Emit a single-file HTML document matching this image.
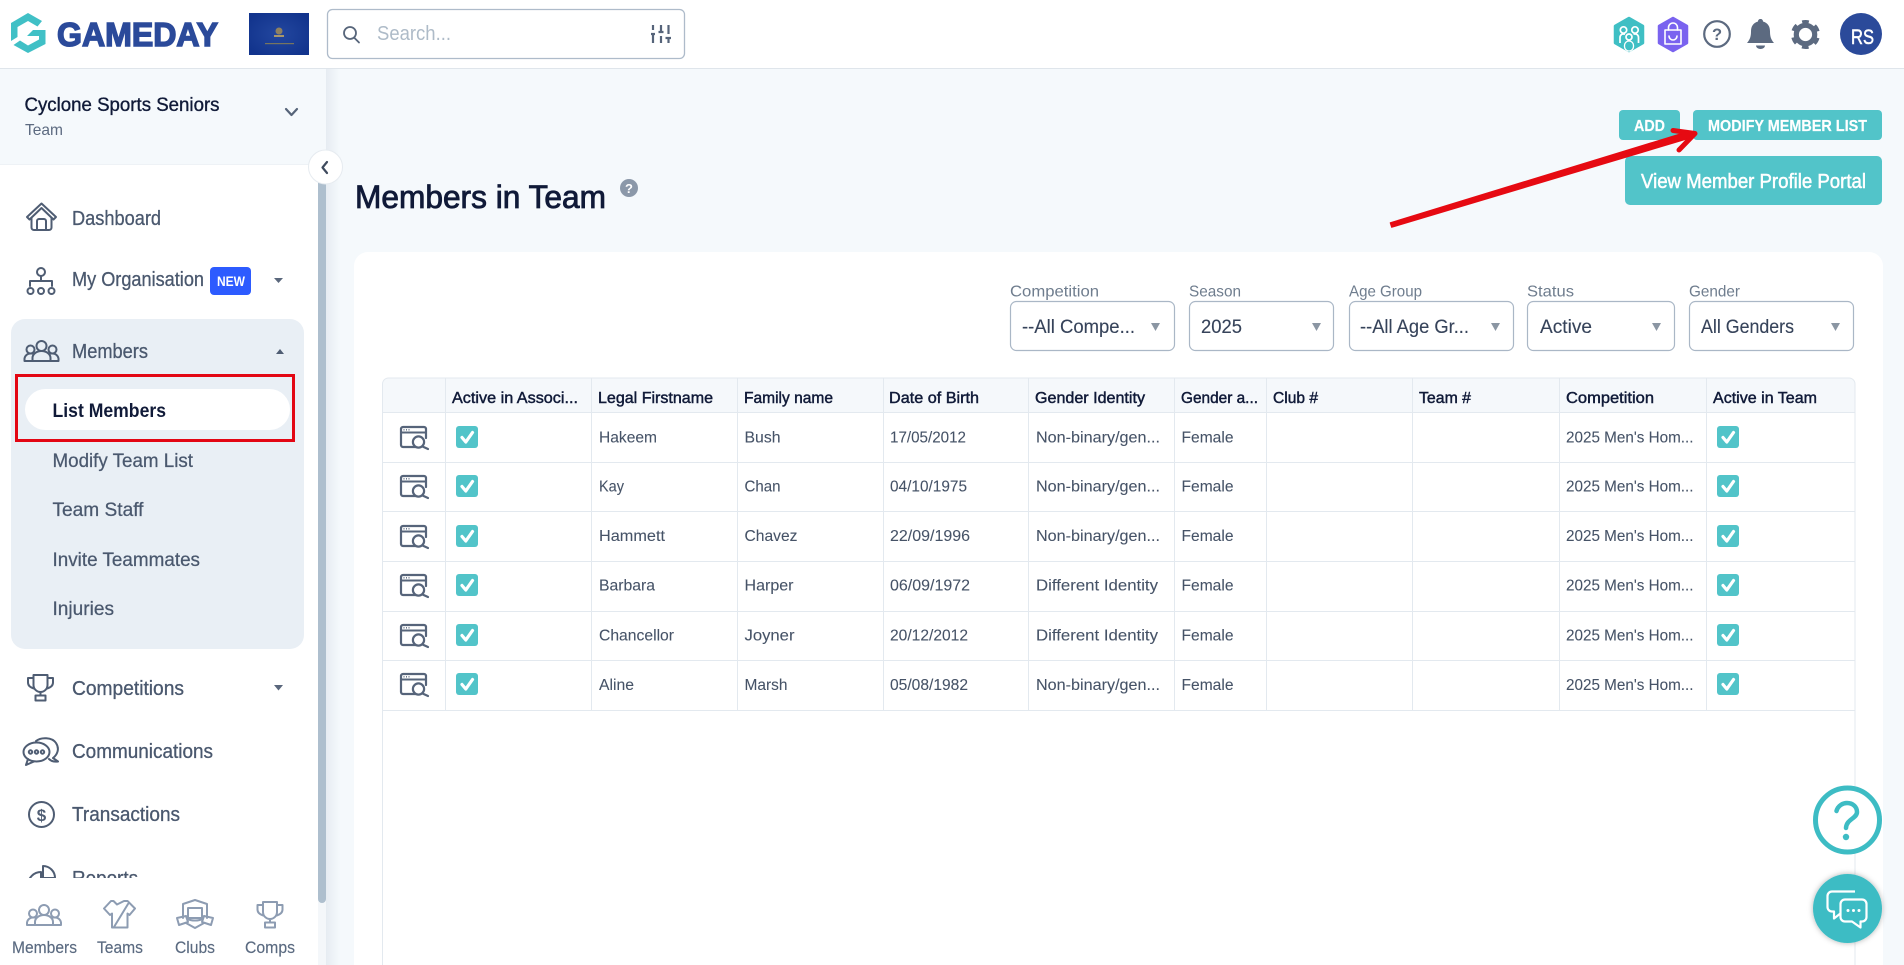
<!DOCTYPE html>
<html lang="en">
<head>
<meta charset="utf-8">
<title>Members in Team</title>
<style>
html,body{margin:0;padding:0;width:1904px;height:965px;overflow:hidden;background:#f5f9fc}
svg{display:block}
text{font-family:"Liberation Sans",Arial,sans-serif;white-space:pre}
.nav{font-size:20px;fill:#4a586e;stroke:#4a586e;stroke-width:.3}
.sub{font-size:19.5px;fill:#4a586e;stroke:#4a586e;stroke-width:.25}
.foot{font-size:17px;fill:#5a6a80;stroke:#5a6a80;stroke-width:.15}
.lab{font-size:16px;fill:#6f7d8e}
.sel{font-size:19px;fill:#36435a;stroke:#36435a;stroke-width:.12}
.th{font-size:16px;fill:#101a38;stroke:#101a38;stroke-width:.45}
.td{font-size:16px;fill:#465367;stroke:#465367;stroke-width:.08}
.ic{fill:none;stroke:#4f5d73;stroke-width:2;stroke-linecap:round;stroke-linejoin:round}
.fic{fill:none;stroke:#8d9cb2;stroke-width:2;stroke-linecap:round;stroke-linejoin:round}
.ln{stroke:#e3e9ef;stroke-width:1}
.btn{font-size:15.5px;font-weight:bold;fill:#fff;stroke:#fff;stroke-width:.2}
</style>
</head>
<body>
<svg width="1904" height="965" viewBox="0 0 1904 965" xmlns="http://www.w3.org/2000/svg">
<defs>
<filter id="sh" x="-20%" y="-20%" width="140%" height="140%"><feDropShadow dx="0" dy="0" stdDeviation="3" flood-color="#000" flood-opacity=".3"/></filter>
<linearGradient id="sg" x1="0" x2="1" y1="0" y2="0"><stop offset="0" stop-color="#e6ecf2"/><stop offset="1" stop-color="#f5f9fc"/></linearGradient>
<radialGradient id="fl" cx=".5" cy=".5" r=".6"><stop offset="0" stop-color="#23479f"/><stop offset="1" stop-color="#12348d"/></radialGradient>
<g id="view">
<path d="M20 21H3a2 2 0 0 1-2-2V3a2 2 0 0 1 2-2h21a2 2 0 0 1 2 2v9" fill="none" stroke="#56647a" stroke-width="2.2" stroke-linecap="round"/>
<path d="M1 6.5H26" stroke="#56647a" stroke-width="2"/>
<path d="M3.5 3.8h1M6 3.8h1M8.5 3.8h1" stroke="#56647a" stroke-width="1.4"/>
<circle cx="18.5" cy="16" r="5.6" fill="#fff" stroke="#56647a" stroke-width="2.2"/>
<path d="M22.5 20.5L28 23" stroke="#56647a" stroke-width="2.2" stroke-linecap="round"/>
</g>
<g id="chk"><rect width="22" height="22" rx="3" fill="#52c4c9"/><path d="M6 11.5L9.8 16L16.5 6.5" fill="none" stroke="#fff" stroke-width="3.2" stroke-linecap="round" stroke-linejoin="round"/></g>
<g id="ppl">
<circle cx="18" cy="6" r="5"/><circle cx="7" cy="9.5" r="4"/><circle cx="29" cy="9.5" r="4"/>
<path d="M1 21V18.500a6 6 0 0 1 6-5h2M35 21V18.500a6 6 0 0 0-6-5h-2M1 21H35M9 21v-3a9 7 0 0 1 18 0v3"/>
</g>
<g id="trophy">
<path d="M7 1H21V11a7 7 0 0 1-14 0ZM7 4H1.500V8.500c0 3 2.500 5 5.800 6M21 4H26.500V8.500c0 3-2.500 5-5.800 6M14 18V21M9 21.500H19V26.500H9Z"/>
</g>
<g id="sel"><path d="M0 0H9L4.500 8Z" fill="#8b96a3"/></g>
</defs>

<!-- main background -->
<rect width="1904" height="965" fill="#f5f9fc"/>

<!-- card -->
<rect x="354" y="252" width="1529" height="760" rx="14" fill="#fff"/>

<!-- header -->
<rect width="1904" height="68" fill="#fff"/>
<rect y="68" width="1904" height="1" fill="#dfe5eb"/>
<path d="M28 13L42 21L37.500 26.500L28 21L17.500 27V37L11 41V23Z" fill="#40c0c6"/>
<path d="M45.500 30V44L28 53L13.500 45L20 40.500L28 45.500L39 39.500V36H27L33 30Z" fill="#40c0c6"/>
<text x="57" y="46" font-size="33.500" font-weight="bold" fill="#2b4a9a" stroke="#2b4a9a" stroke-width="1.500" textLength="161" lengthAdjust="spacingAndGlyphs">GAMEDAY</text>
<rect x="249" y="13" width="60" height="42" fill="url(#fl)"/>
<circle cx="279" cy="31" r="3.500" fill="#8f8160"/><rect x="274" y="35" width="10" height="2" fill="#a8976a"/><rect x="265" y="43" width="29" height="1.200" fill="#77755f"/>
<rect x="327.500" y="9.500" width="357" height="49" rx="5" fill="#fff" stroke="#aebbca" stroke-width="1.300"/>
<circle cx="350" cy="33" r="6" fill="none" stroke="#57657a" stroke-width="1.800"/><path d="M354.500 38L359 42.500" stroke="#57657a" stroke-width="1.800" stroke-linecap="round"/>
<text x="377" y="40" font-size="20" fill="#aebbc8" textLength="74" lengthAdjust="spacingAndGlyphs">Search...</text>
<path d="M653 25V30M651 34H655M653 34V43M661 25V32M658.500 32H663.500M661 36V43M668.500 25V34M665.500 38H671M668.500 38V43" fill="none" stroke="#56647a" stroke-width="2.200"/>

<!-- top right icons -->
<path d="M1629 18L1643 26V43L1629 51L1615 43V26Z" fill="#3fbfc4" stroke="#3fbfc4" stroke-linejoin="round" stroke-width="2.500"/>
<g fill="none" stroke="#fff" stroke-width="1.700"><circle cx="1623.500" cy="30" r="3.200"/><circle cx="1635" cy="30" r="3.200"/><path d="M1620 43v-5.500c0-2 1.500-3.500 3-3.500h2M1638.500 43v-5.500c0-2-1.500-3.500-3-3.500h-2"/><circle cx="1629" cy="37" r="3"/></g>
<rect x="1624.500" y="41" width="9" height="10" rx="4.500" fill="#3fbfc4" stroke="#fff" stroke-width="1.300"/>
<path d="M1673 18L1687 26V43L1673 51L1659 43V26Z" fill="#7a63ef" stroke="#7a63ef" stroke-linejoin="round" stroke-width="2.500"/>
<g fill="none" stroke="#fff" stroke-width="1.600" stroke-linecap="round"><path d="M1665 30H1681V44H1665Z" stroke-linejoin="round"/><path d="M1668.500 30v-2.500a4.500 4.500 0 0 1 9 0v2.500M1669 36a4 4 0 0 0 8 0"/></g>
<circle cx="1717" cy="34" r="12.800" fill="none" stroke="#5c6a80" stroke-width="2.200"/>
<text x="1717" y="40" font-size="16.500" font-weight="bold" text-anchor="middle" fill="#5c6a80">?</text>
<path d="M1760.500 19c1.500 0 2.500 1 2.500 2.500c5 1.500 7 5 7 10c0 5 1 8 4 11.500H1747c3-3.500 4-6.500 4-11.500c0-5 2-8.500 7-10c0-1.500 1-2.500 2.500-2.500Z" fill="#5c6a80"/>
<path d="M1756 45.500h9a4.500 3.500 0 0 1-9 0Z" fill="#5c6a80"/>
<circle cx="1805.500" cy="34.500" r="9.200" fill="none" stroke="#5c6a80" stroke-width="5.200"/>
<circle cx="1805.500" cy="34.500" r="12.500" fill="none" stroke="#5c6a80" stroke-width="4" stroke-dasharray="6.500 6.590" transform="rotate(-105 1805.500 34.500)"/>
<circle cx="1861" cy="34" r="21" fill="#2b4a9a"/>
<text x="1851" y="44" font-size="21" fill="#fff" stroke="#fff" stroke-width=".5" textLength="23" lengthAdjust="spacingAndGlyphs">RS</text>

<!-- action buttons -->
<rect x="1619" y="110" width="61" height="30" rx="4" fill="#52c4c9"/>
<text class="btn" x="1634" y="131" textLength="31" lengthAdjust="spacingAndGlyphs">ADD</text>
<rect x="1693" y="110" width="189" height="30" rx="4" fill="#52c4c9"/>
<text class="btn" x="1708" y="131" textLength="159" lengthAdjust="spacingAndGlyphs">MODIFY MEMBER LIST</text>
<rect x="1625" y="156" width="257" height="49" rx="5" fill="#52c4c9"/>
<text x="1641" y="188" font-size="20" fill="#fff" stroke="#fff" stroke-width=".5" textLength="225" lengthAdjust="spacingAndGlyphs">View Member Profile Portal</text>

<!-- heading -->
<text x="355" y="208" font-size="32" fill="#101a38" stroke="#101a38" stroke-width=".85" textLength="251" lengthAdjust="spacingAndGlyphs">Members in Team</text>
<circle cx="629" cy="188" r="9" fill="#8b98a9"/>
<text x="629" y="193" font-size="13" font-weight="bold" fill="#fff" text-anchor="middle">?</text>

<!-- filters -->
<text class="lab" x="1010" y="296.500" textLength="89" lengthAdjust="spacingAndGlyphs">Competition</text>
<text class="lab" x="1189" y="296.500" textLength="52" lengthAdjust="spacingAndGlyphs">Season</text>
<text class="lab" x="1349" y="296.500" textLength="73" lengthAdjust="spacingAndGlyphs">Age Group</text>
<text class="lab" x="1527" y="296.500" textLength="47" lengthAdjust="spacingAndGlyphs">Status</text>
<text class="lab" x="1689" y="296.500" textLength="51" lengthAdjust="spacingAndGlyphs">Gender</text>
<g fill="#fff" stroke="#aab7c6" stroke-width="1.200">
<rect x="1010.500" y="301.500" width="164" height="49" rx="6"/>
<rect x="1189.500" y="301.500" width="144" height="49" rx="6"/>
<rect x="1349.500" y="301.500" width="164" height="49" rx="6"/>
<rect x="1527.500" y="301.500" width="147" height="49" rx="6"/>
<rect x="1689.500" y="301.500" width="164" height="49" rx="6"/>
</g>
<text class="sel" x="1022" y="333" textLength="113" lengthAdjust="spacingAndGlyphs">--All Compe...</text>
<text class="sel" x="1201" y="333" textLength="41" lengthAdjust="spacingAndGlyphs">2025</text>
<text class="sel" x="1360" y="333" textLength="109" lengthAdjust="spacingAndGlyphs">--All Age Gr...</text>
<text class="sel" x="1540" y="333" textLength="52" lengthAdjust="spacingAndGlyphs">Active</text>
<text class="sel" x="1701" y="333" textLength="93" lengthAdjust="spacingAndGlyphs">All Genders</text>
<use href="#sel" x="1151" y="323"/><use href="#sel" x="1312" y="323"/><use href="#sel" x="1491" y="323"/><use href="#sel" x="1652" y="323"/><use href="#sel" x="1831" y="323"/>

<!-- table -->
<path d="M382.500 965V384a6 6 0 0 1 6-6H1849a6 6 0 0 1 6 6V965Z" fill="#fff"/>
<path d="M382.500 412V384a6 6 0 0 1 6-6H1849a6 6 0 0 1 6 6V412Z" fill="#f5f8fb"/>
<path class="ln" d="M382.500 965V384a6 6 0 0 1 6-6H1849a6 6 0 0 1 6 6V965" fill="none"/>
<path class="ln" d="M382 412.500H1855M382 462.500H1855M382 511.500H1855M382 561.500H1855M382 611.500H1855M382 660.500H1855M382 710.500H1855"/>
<path class="ln" d="M445.500 378V710M591.500 378V710M737.500 378V710M883.500 378V710M1028.500 378V710M1174.500 378V710M1266.500 378V710M1412.500 378V710M1559.500 378V710M1706.500 378V710"/>

<text class="th" x="452" y="403" textLength="126" lengthAdjust="spacingAndGlyphs">Active in Associ...</text>
<text class="th" x="598" y="403" textLength="115" lengthAdjust="spacingAndGlyphs">Legal Firstname</text>
<text class="th" x="744" y="403" textLength="89" lengthAdjust="spacingAndGlyphs">Family name</text>
<text class="th" x="889" y="403" textLength="90" lengthAdjust="spacingAndGlyphs">Date of Birth</text>
<text class="th" x="1035" y="403" textLength="110" lengthAdjust="spacingAndGlyphs">Gender Identity</text>
<text class="th" x="1181" y="403" textLength="77" lengthAdjust="spacingAndGlyphs">Gender a...</text>
<text class="th" x="1273" y="403" textLength="45" lengthAdjust="spacingAndGlyphs">Club #</text>
<text class="th" x="1419" y="403" textLength="52" lengthAdjust="spacingAndGlyphs">Team #</text>
<text class="th" x="1566" y="403" textLength="88" lengthAdjust="spacingAndGlyphs">Competition</text>
<text class="th" x="1713" y="403" textLength="104" lengthAdjust="spacingAndGlyphs">Active in Team</text>

<!-- row 1 -->
<use href="#view" x="400" y="426"/><use href="#chk" x="456" y="426"/><use href="#chk" x="1717" y="426"/>
<text class="td" x="599" y="442.500" textLength="58" lengthAdjust="spacingAndGlyphs">Hakeem</text>
<text class="td" x="744.500" y="442.500" textLength="36" lengthAdjust="spacingAndGlyphs">Bush</text>
<text class="td" x="890" y="442.500" textLength="76" lengthAdjust="spacingAndGlyphs">17/05/2012</text>
<text class="td" x="1036" y="442.500" textLength="124" lengthAdjust="spacingAndGlyphs">Non-binary/gen...</text>
<text class="td" x="1181.500" y="442.500" textLength="52" lengthAdjust="spacingAndGlyphs">Female</text>
<text class="td" x="1566" y="442.500" textLength="127.500" lengthAdjust="spacingAndGlyphs">2025 Men's Hom...</text>
<!-- row 2 -->
<use href="#view" x="400" y="475"/><use href="#chk" x="456" y="475"/><use href="#chk" x="1717" y="475"/>
<text class="td" x="599" y="491.500" textLength="25" lengthAdjust="spacingAndGlyphs">Kay</text>
<text class="td" x="744.500" y="491.500" textLength="36" lengthAdjust="spacingAndGlyphs">Chan</text>
<text class="td" x="890" y="491.500" textLength="77" lengthAdjust="spacingAndGlyphs">04/10/1975</text>
<text class="td" x="1036" y="491.500" textLength="124" lengthAdjust="spacingAndGlyphs">Non-binary/gen...</text>
<text class="td" x="1181.500" y="491.500" textLength="52" lengthAdjust="spacingAndGlyphs">Female</text>
<text class="td" x="1566" y="491.500" textLength="127.500" lengthAdjust="spacingAndGlyphs">2025 Men's Hom...</text>
<!-- row 3 -->
<use href="#view" x="400" y="525"/><use href="#chk" x="456" y="525"/><use href="#chk" x="1717" y="525"/>
<text class="td" x="599" y="541" textLength="66" lengthAdjust="spacingAndGlyphs">Hammett</text>
<text class="td" x="744.500" y="541" textLength="53" lengthAdjust="spacingAndGlyphs">Chavez</text>
<text class="td" x="890" y="541" textLength="80" lengthAdjust="spacingAndGlyphs">22/09/1996</text>
<text class="td" x="1036" y="541" textLength="124" lengthAdjust="spacingAndGlyphs">Non-binary/gen...</text>
<text class="td" x="1181.500" y="541" textLength="52" lengthAdjust="spacingAndGlyphs">Female</text>
<text class="td" x="1566" y="541" textLength="127.500" lengthAdjust="spacingAndGlyphs">2025 Men's Hom...</text>
<!-- row 4 -->
<use href="#view" x="400" y="574"/><use href="#chk" x="456" y="574"/><use href="#chk" x="1717" y="574"/>
<text class="td" x="599" y="590.500" textLength="56" lengthAdjust="spacingAndGlyphs">Barbara</text>
<text class="td" x="744.500" y="590.500" textLength="49" lengthAdjust="spacingAndGlyphs">Harper</text>
<text class="td" x="890" y="590.500" textLength="80" lengthAdjust="spacingAndGlyphs">06/09/1972</text>
<text class="td" x="1036" y="590.500" textLength="122" lengthAdjust="spacingAndGlyphs">Different Identity</text>
<text class="td" x="1181.500" y="590.500" textLength="52" lengthAdjust="spacingAndGlyphs">Female</text>
<text class="td" x="1566" y="590.500" textLength="127.500" lengthAdjust="spacingAndGlyphs">2025 Men's Hom...</text>
<!-- row 5 -->
<use href="#view" x="400" y="624"/><use href="#chk" x="456" y="624"/><use href="#chk" x="1717" y="624"/>
<text class="td" x="599" y="640.500" textLength="75" lengthAdjust="spacingAndGlyphs">Chancellor</text>
<text class="td" x="744.500" y="640.500" textLength="50" lengthAdjust="spacingAndGlyphs">Joyner</text>
<text class="td" x="890" y="640.500" textLength="78" lengthAdjust="spacingAndGlyphs">20/12/2012</text>
<text class="td" x="1036" y="640.500" textLength="122" lengthAdjust="spacingAndGlyphs">Different Identity</text>
<text class="td" x="1181.500" y="640.500" textLength="52" lengthAdjust="spacingAndGlyphs">Female</text>
<text class="td" x="1566" y="640.500" textLength="127.500" lengthAdjust="spacingAndGlyphs">2025 Men's Hom...</text>
<!-- row 6 -->
<use href="#view" x="400" y="673"/><use href="#chk" x="456" y="673"/><use href="#chk" x="1717" y="673"/>
<text class="td" x="599" y="690" textLength="35" lengthAdjust="spacingAndGlyphs">Aline</text>
<text class="td" x="744.500" y="690" textLength="43" lengthAdjust="spacingAndGlyphs">Marsh</text>
<text class="td" x="890" y="690" textLength="78" lengthAdjust="spacingAndGlyphs">05/08/1982</text>
<text class="td" x="1036" y="690" textLength="124" lengthAdjust="spacingAndGlyphs">Non-binary/gen...</text>
<text class="td" x="1181.500" y="690" textLength="52" lengthAdjust="spacingAndGlyphs">Female</text>
<text class="td" x="1566" y="690" textLength="127.500" lengthAdjust="spacingAndGlyphs">2025 Men's Hom...</text>

<!-- sidebar -->
<rect x="326" y="69" width="14" height="896" fill="url(#sg)"/>
<rect y="69" width="326" height="896" fill="#fff"/>
<rect y="69" width="326" height="95" fill="#f5f9fc"/>
<rect y="164" width="326" height="1" fill="#eef2f6"/>
<rect x="318" y="164" width="8" height="801" fill="#f4f7fa"/>
<rect x="318" y="170" width="8" height="733" rx="4" fill="#aebfce"/>
<text x="24.500" y="111" font-size="19" fill="#101a38" stroke="#101a38" stroke-width=".35" textLength="195" lengthAdjust="spacingAndGlyphs">Cyclone Sports Seniors</text>
<text x="25" y="135" font-size="16" fill="#5c6a80" textLength="38" lengthAdjust="spacingAndGlyphs">Team</text>
<path d="M286 109L291.500 115L297 109" fill="none" stroke="#566479" stroke-width="2.200" stroke-linecap="round" stroke-linejoin="round"/>
<circle cx="325.500" cy="167" r="17" fill="#fff" stroke="#e6ebf0"/>
<path d="M327 162L322.500 167.500L327 173" fill="none" stroke="#3f4b5e" stroke-width="2.200" stroke-linecap="round" stroke-linejoin="round"/>

<!-- dashboard -->
<path class="ic" d="M27 217L41.500 203.500L56 217L53.500 219.500L41.500 208L29.500 219.500ZM31.500 218V227.500a2.500 2.500 0 0 0 2.500 2.500H49a2.500 2.500 0 0 0 2.500-2.500V218M37 230V221a2 2 0 0 1 2-2H44a2 2 0 0 1 2 2V230" stroke-width="1.800"/>
<text class="nav" x="72" y="225" textLength="89" lengthAdjust="spacingAndGlyphs">Dashboard</text>
<!-- my org -->
<g class="ic" stroke-width="1.800"><circle cx="41" cy="272" r="4"/><path d="M41 276V281M30 286V281H52V286"/><circle cx="30.500" cy="291" r="3"/><circle cx="41" cy="291" r="3"/><circle cx="51.500" cy="291" r="3"/></g>
<text class="nav" x="72" y="286" textLength="132" lengthAdjust="spacingAndGlyphs">My Organisation</text>
<rect x="210" y="267" width="41" height="28" rx="4" fill="#2d5bff"/>
<text x="217" y="286" font-size="13.500" font-weight="bold" fill="#fff" textLength="28" lengthAdjust="spacingAndGlyphs">NEW</text>
<path d="M274 278H283L278.500 283Z" fill="#5a677c"/>

<!-- members group -->
<rect x="11" y="319" width="293" height="330" rx="14" fill="#e9eff5"/>
<g class="ic" transform="translate(23.500 340)"><use href="#ppl"/></g>
<text class="nav" x="72" y="358" textLength="76" lengthAdjust="spacingAndGlyphs">Members</text>
<path d="M276 354H284L280 349Z" fill="#4f5d73"/>
<rect x="25" y="389" width="265" height="41" rx="20.500" fill="#fff"/>
<text x="52.500" y="417" font-size="19.500" font-weight="bold" fill="#101a38" textLength="113.500" lengthAdjust="spacingAndGlyphs">List Members</text>
<rect x="16.500" y="375.500" width="277" height="65" fill="none" stroke="#e30613" stroke-width="3"/>
<text class="sub" x="52.500" y="467" textLength="140.500" lengthAdjust="spacingAndGlyphs">Modify Team List</text>
<text class="sub" x="52.500" y="516" textLength="91" lengthAdjust="spacingAndGlyphs">Team Staff</text>
<text class="sub" x="52.500" y="566" textLength="147.500" lengthAdjust="spacingAndGlyphs">Invite Teammates</text>
<text class="sub" x="52.500" y="615" textLength="61.500" lengthAdjust="spacingAndGlyphs">Injuries</text>

<!-- competitions -->
<g class="ic" transform="translate(26.500 674)"><use href="#trophy"/></g>
<text class="nav" x="72" y="695" textLength="112" lengthAdjust="spacingAndGlyphs">Competitions</text>
<path d="M274 685H283L278.500 690.500Z" fill="#5a677c"/>
<!-- communications -->
<g class="ic" stroke-width="1.800">
<path d="M36 741C41 737 52 737 56 743C60 749 57 755 53 758L58 761.500C54 762 51 761 49 759"/>
<ellipse cx="36.500" cy="752" rx="13" ry="9.500"/>
<path d="M28 759L26 765L34 761.500"/>
<circle cx="30.500" cy="752" r="1.700"/><circle cx="36.500" cy="752" r="1.700"/><circle cx="42.500" cy="752" r="1.700"/>
</g>
<text class="nav" x="72" y="758" textLength="141" lengthAdjust="spacingAndGlyphs">Communications</text>
<!-- transactions -->
<circle class="ic" cx="41.500" cy="814.500" r="12.500"/>
<text x="41.500" y="821" font-size="17" font-weight="bold" fill="#4f5d73" text-anchor="middle">$</text>
<text class="nav" x="72" y="821" textLength="108" lengthAdjust="spacingAndGlyphs">Transactions</text>
<!-- reports -->
<path class="ic" d="M28 885a13 13 0 0 1 13-13M43 866a12 12 0 0 1 12 12H43ZM41 872V885"/>
<text class="nav" x="72" y="885" textLength="66" lengthAdjust="spacingAndGlyphs">Reports</text>

<!-- bottom nav -->
<rect y="878" width="318" height="87" fill="#fff"/>
<g class="fic" transform="translate(26 904)"><use href="#ppl"/></g>
<path class="fic" d="M111 901L104 908.500L110 915L112 913.500V927.500H127.500V913.500L129.500 915L135 908.500L127.500 901H124L117 904.500L113.500 901ZM114 927L128 904"/>
<g class="fic"><path d="M183 918V904L195 900L207 904V918"/><path d="M188 908H202V918H188Z"/><path d="M177 918L186 916L188 922L179 925ZM213 918L204 916L202 922L211 925ZM188 919C191 921 199 921 202 919M186 923L195 928L204 923"/></g>
<g class="fic" transform="translate(256 901)"><use href="#trophy"/></g>
<text class="foot" x="12" y="953" textLength="65" lengthAdjust="spacingAndGlyphs">Members</text>
<text class="foot" x="97" y="953" textLength="46" lengthAdjust="spacingAndGlyphs">Teams</text>
<text class="foot" x="175" y="953" textLength="40" lengthAdjust="spacingAndGlyphs">Clubs</text>
<text class="foot" x="245" y="953" textLength="50" lengthAdjust="spacingAndGlyphs">Comps</text>

<!-- red annotation arrow -->
<path d="M1390.300 222.800L1689 131.300L1691 137.700L1391.700 227.200Z" fill="#e60a12" stroke="#e60a12" stroke-width="1.200" stroke-linejoin="round"/>
<path d="M1673 130.500L1695 133.500L1679 150" fill="none" stroke="#e60a12" stroke-width="5" stroke-linecap="round" stroke-linejoin="round"/>

<!-- floating help -->
<circle cx="1847.500" cy="820" r="32" fill="#fff" stroke="#3dbcc4" stroke-width="5"/>
<path d="M1836.500 811C1838 805.500 1843 803 1847 803C1853 803 1857 807 1857 812C1857 818.500 1846.500 819 1846 828" fill="none" stroke="#3dbcc4" stroke-width="4.500" stroke-linecap="round"/>
<circle cx="1846" cy="837" r="3.200" fill="#3dbcc4"/>
<circle cx="1847.500" cy="908.500" r="34.500" fill="#3dbcc4" filter="url(#sh)"/>
<g fill="none" stroke="#fff" stroke-width="2.200" stroke-linejoin="round">
<path d="M1855 891.500H1832a4.500 4.500 0 0 0-4.500 4.500V907a4.500 4.500 0 0 0 4.500 4.500h2V918.500L1841 913"/>
<path d="M1845 899.500H1862a4.500 4.500 0 0 1 4.500 4.500V917a4.500 4.500 0 0 1-4.500 4.500H1860.500V927.500L1852 921.500H1845a4.500 4.500 0 0 1-4.500-4.500V904a4.500 4.500 0 0 1 4.500-4.500Z" fill="#3dbcc4"/>
</g>
<g fill="#fff"><circle cx="1848" cy="910.500" r="1.500"/><circle cx="1853.500" cy="910.500" r="1.500"/><circle cx="1859" cy="910.500" r="1.500"/></g>
</svg>
</body>
</html>
